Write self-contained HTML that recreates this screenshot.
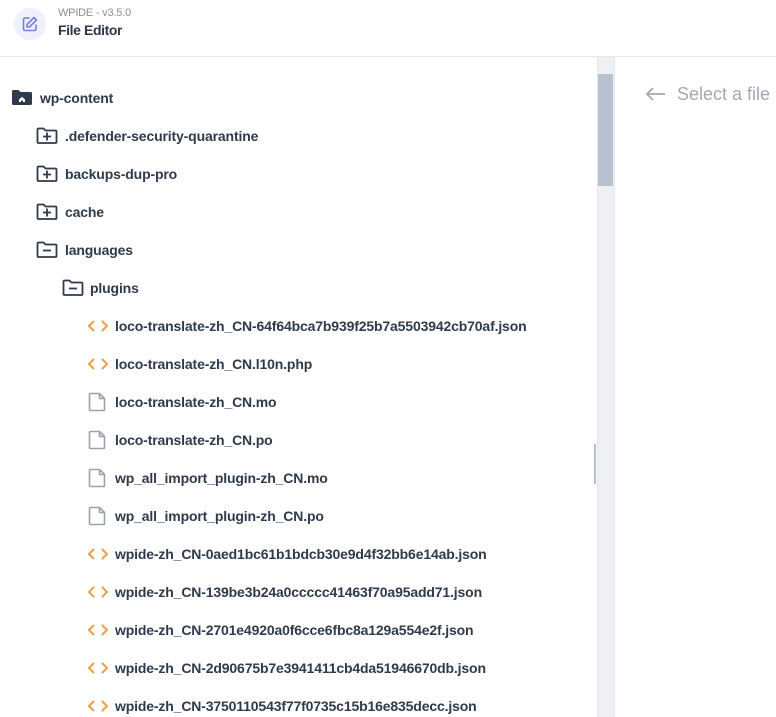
<!DOCTYPE html>
<html><head><meta charset="utf-8"><style>
*{margin:0;padding:0;box-sizing:border-box}
body{width:776px;height:717px;overflow:hidden;background:#fff;font-family:"Liberation Sans",sans-serif;position:relative}
.hdr{position:absolute;left:0;top:0;width:776px;height:57px;border-bottom:1px solid #e5e7eb}
.logo{position:absolute;left:14px;top:8px;width:32px;height:32px;border-radius:50%;background:#eef0fb}
.ver{position:absolute;left:58px;top:7px;font-size:11px;color:#8a909a;letter-spacing:-0.2px}
.ttl{position:absolute;left:58px;top:22px;font-size:14px;font-weight:bold;color:#2d3748;letter-spacing:-0.4px}
.row{position:absolute;height:20px;font-size:14px;font-weight:bold;color:#2f3a4b;white-space:nowrap;line-height:20px;letter-spacing:-0.15px}
.row span{position:absolute;top:0}
.sb{position:absolute;left:597px;top:57px;width:17px;height:660px;background:#eef0f3;border-left:1px solid #e4e6ea}
.thumb{position:absolute;left:598px;top:74px;width:15px;height:112px;background:#b8c1cf}
.vl{position:absolute;left:614px;top:57px;width:1px;height:660px;background:#e5e7eb}
.sel{position:absolute;left:677px;top:84px;font-size:18px;color:#a3a9b3}
</style></head><body>
<div class="hdr">
<div class="logo"><svg width="32" height="32" viewBox="0 0 32 32"><path d="M15 10h-4a1.5 1.5 0 0 0-1.5 1.5v9.5a1.5 1.5 0 0 0 1.5 1.5h9.5a1.5 1.5 0 0 0 1.5-1.5v-4" fill="none" stroke="#7b7fe0" stroke-width="1.6" stroke-linecap="round"/><path d="M20 9.5l2.5 2.5-7 7h-2.5v-2.5z" fill="none" stroke="#7b7fe0" stroke-width="1.6" stroke-linejoin="round"/></svg></div>
<div class="ver">WPIDE - v3.5.0</div>
<div class="ttl">File Editor</div>
</div>
<div class="sb"></div><div class="thumb"></div><div class="vl"></div>
<div style="position:absolute;left:594px;top:444px;width:2px;height:40px;background:#b8c1cf"></div>
<svg style="position:absolute;left:645px;top:86px" width="22" height="16" viewBox="0 0 22 16"><path d="M20 8H2M8 2L2 8l6 6" fill="none" stroke="#a3a9b3" stroke-width="1.8"/></svg>
<div class="sel">Select a file</div>
<div id="tree"></div>
<script>
var home='<svg width="22" height="20" viewBox="0 0 22 20"><path d="M1 3.5a1.5 1.5 0 0 1 1.5-1.5h5l2 2h10a1.5 1.5 0 0 1 1.5 1.5v10a1.5 1.5 0 0 1-1.5 1.5h-17A1.5 1.5 0 0 1 1 15.5z" fill="#2f3a4b"/><path d="M8 11.5l3-2.7 3 2.7v2.5h-2v-1.5h-2v1.5h-2z" fill="#fff"/></svg>';
function fold(m){return '<svg width="22" height="20" viewBox="0 0 22 20"><path d="M1.5 3.5a1 1 0 0 1 1-1h5l2 2h10a1 1 0 0 1 1 1v10.5a1 1 0 0 1-1 1h-17a1 1 0 0 1-1-1z" fill="none" stroke="#2f3a4b" stroke-width="1.8"/><path d="M7 10.5h8'+(m?'':'M11 6.5v8')+'" stroke="#2f3a4b" stroke-width="1.8"/></svg>';}
var code='<svg width="24" height="20" viewBox="0 0 24 20"><path d="M8 5l-5 5 5 5M16 5l5 5-5 5" fill="none" stroke="#e8a04a" stroke-width="2"/></svg>';
var doc='<svg width="22" height="20" viewBox="0 0 22 20"><path d="M3.5 1.5h9l5 5v11a1 1 0 0 1-1 1h-13a1 1 0 0 1-1-1v-15a1 1 0 0 1 1-1zM12.5 1.5v5h5" fill="none" stroke="#9aa3ad" stroke-width="1.6" stroke-linejoin="round"/></svg>';
var items=[[11,40,home,'wp-content'],[36,65,fold(0),'.defender-security-quarantine'],[36,65,fold(0),'backups-dup-pro'],[36,65,fold(0),'cache'],[36,65,fold(1),'languages'],[62,90,fold(1),'plugins'],
[86,115,code,'loco-translate-zh_CN-64f64bca7b939f25b7a5503942cb70af.json'],[86,115,code,'loco-translate-zh_CN.l10n.php'],[87,115,doc,'loco-translate-zh_CN.mo'],[87,115,doc,'loco-translate-zh_CN.po'],[87,115,doc,'wp_all_import_plugin-zh_CN.mo'],[87,115,doc,'wp_all_import_plugin-zh_CN.po'],
[86,115,code,'wpide-zh_CN-0aed1bc61b1bdcb30e9d4f32bb6e14ab.json'],[86,115,code,'wpide-zh_CN-139be3b24a0ccccc41463f70a95add71.json'],[86,115,code,'wpide-zh_CN-2701e4920a0f6cce6fbc8a129a554e2f.json'],[86,115,code,'wpide-zh_CN-2d90675b7e3941411cb4da51946670db.json'],[86,115,code,'wpide-zh_CN-3750110543f77f0735c15b16e835decc.json']];
var h='';items.forEach(function(it,i){var y=88+i*38;h+='<div class="row" style="left:0;top:'+y+'px;width:596px">'+it[2].replace('<svg','<svg style="position:absolute;left:'+it[0]+'px;top:0"')+'<span style="left:'+it[1]+'px">'+it[3]+'</span></div>';});
document.getElementById('tree').innerHTML=h;
</script>
</body></html>
